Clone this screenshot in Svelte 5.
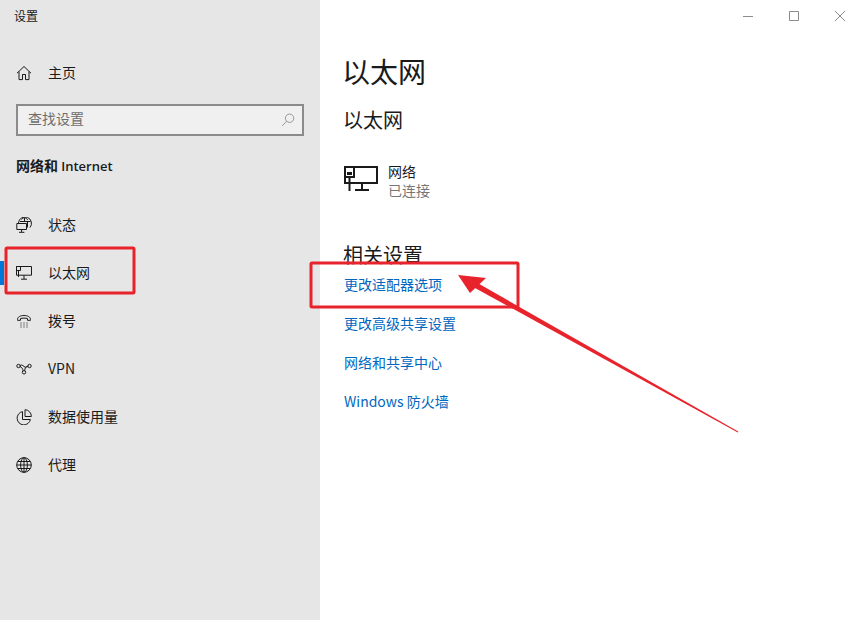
<script>
	const nav = [
		{ id: 'status', label: '状态' },
		{ id: 'ethernet', label: '以太网', active: true },
		{ id: 'dialup', label: '拨号' },
		{ id: 'vpn', label: 'VPN' },
		{ id: 'usage', label: '数据使用量' },
		{ id: 'proxy', label: '代理' }
	];

	const links = ['更改适配器选项', '更改高级共享设置', '网络和共享中心', 'Windows 防火墙'];
</script>

<div class="window">
	<aside class="sidebar">
		<div class="app-title">设置</div>
		<div class="home">
			<svg class="icon" viewBox="0 0 16 16" fill="none" stroke="currentColor">
				<path d="M1 8.200 8 1.500l7 6.700M3 6.600v8h3.500V9.500h3v5.100H13v-8" />
			</svg>
			<span>主页</span>
		</div>
		<div class="search">
			<span>查找设置</span>
			<svg viewBox="0 0 16 16" width="14" height="14" fill="none" stroke="#8a8a8a">
				<circle cx="9.800" cy="6" r="4.800" />
				<path d="M6.400 9.400 1.200 14.800" />
			</svg>
		</div>
		<div class="section">网络和 <span>Internet</span></div>
		<nav>
			{#each nav as item}
				<div class="nav-item">
					{#if item.active}<i class="marker"></i>{/if}
					<svg class="icon" viewBox="0 0 16 16" fill="none" stroke="currentColor">
						{#if item.id === 'status'}
							<path d="M2.500 6A6.500 6.500 0 1 1 14 10.500M5.500 2.500C6.500 1.300 7.500 .7 8.500 .7s2.500 1 3.300 2.300M4 4.500h10.500M8.500 .7v3.800M11.500 4.500v6" />
							<path d="M.8 6.500h9.700v6H.8zM5.600 12.500v2.500M3 15.300h5.400" />
						{:else if item.id === 'ethernet'}
							<path d="M.5 1.500h15v8.700H.5zM.5 1.500h4v4h-4zM2.500 5.500V12M8 10.200v3.800M5 14.200h6" />
						{:else if item.id === 'dialup'}
							<path d="M1.500 6.500C1.500 3.800 4.500 2.500 8 2.500s6.500 1.300 6.500 4v.8h-3V5.500C10 5 6 5 4.500 5.500v1.800h-3z" />
							<path d="M4.500 10h1M7.500 10h1M10.500 10h1M4.500 12h1M7.500 12h1M10.500 12h1M4.500 14h1M7.500 14h1M10.500 14h1" />
						{:else if item.id === 'vpn'}
							<circle cx="2.500" cy="5" r="1.700" />
							<circle cx="13.500" cy="5" r="1.700" />
							<circle cx="8" cy="11.300" r="1.700" />
							<path d="M4 5.500c1.500 .5 3 2.500 3 4.300M12 5.500C10 5 8.500 7.500 8.800 9.800M4 4.700C5 3.500 6.500 4 8 5.500S11 6 12 4.700" />
						{:else if item.id === 'usage'}
							<path d="M6.500 2.600A6.700 6.700 0 1 0 14.400 10.500H6.500zM9 .7a6.500 6.500 0 0 1 6.300 6.800H9z" />
						{:else}
							<circle cx="8" cy="8" r="7.300" />
							<ellipse cx="8" cy="8" rx="3.400" ry="7.300" />
							<path d="M8 .7v14.600M.7 8h14.600M1.700 4.500h12.600M1.700 11.500h12.600" />
						{/if}
					</svg>
					<span>{item.label}</span>
				</div>
			{/each}
		</nav>
	</aside>

	<main class="content">
		<div class="controls">
			<svg viewBox="0 0 10 10" width="10" height="10" stroke="#8c8c8c" fill="none">
				<path d="M0 5.500h10" />
			</svg>
			<svg viewBox="0 0 10 10" width="10" height="10" stroke="#8c8c8c" fill="none">
				<path d="M.5 .5h9v9h-9z" />
			</svg>
			<svg viewBox="0 0 10 10" width="10" height="10" stroke="#8c8c8c" fill="none">
				<path d="M0 0l10 10M10 0 0 10" />
			</svg>
		</div>
		<h1>以太网</h1>
		<h2>以太网</h2>
		<div class="network">
			<svg class="network-icon" viewBox="0 0 34 26" width="34" height="26" fill="none" stroke="#1a1a1a" stroke-width="2">
				<path d="M1 1h32v16H1zM1 1h9v10H1zM5.500 11v14M18 17v7M11 24h14" />
				<path d="M3 6h5v3H3z" fill="#1a1a1a" stroke="none" />
			</svg>
			<div>
				<div>网络</div>
				<div class="muted">已连接</div>
			</div>
		</div>
		<h3>相关设置</h3>
		<ul>
			{#each links as link}
				<li>{link}</li>
			{/each}
		</ul>
	</main>

	<!-- red markup drawn on top of the screenshot -->
	<svg class="markup" viewBox="0 0 863 620" fill="none" stroke="#e8232b">
		<rect x="6" y="248" width="128" height="45" rx="1" stroke-width="3" />
		<rect x="311" y="263" width="207" height="44" rx="1" stroke-width="3" />
		<path d="M468.600 284.400 471.400 279.600 738.200 431.600 737.800 432.400Z" fill="#e8232b" stroke="none" />
		<path d="M458 275 486 278 470 293Z" fill="#e8232b" stroke="none" />
	</svg>
</div>

<style>
	:global(body) {
		margin: 0;
		background: #fff;
	}

	.window {
		position: relative;
		display: flex;
		width: 863px;
		height: 620px;
		overflow: hidden;
		color: #1a1a1a;
		font-family: 'Noto Sans CJK SC', 'Open Sans', sans-serif;
		font-size: 14px;
	}

	.sidebar {
		flex: none;
		width: 320px;
		padding-top: 8px;
		box-sizing: border-box;
		background: #e6e6e6;
	}

	.app-title {
		height: 18px;
		padding-left: 14px;
		font-size: 12px;
		line-height: 16px;
	}

	.icon {
		flex: none;
		width: 16px;
		height: 16px;
	}

	.home,
	.nav-item {
		position: relative;
		display: flex;
		align-items: center;
		gap: 16px;
		height: 48px;
		padding-left: 16px;
	}

	.home span,
	.nav-item span {
		padding-bottom: 2px;
	}

	.home {
		margin-top: 23px;
	}

	.search {
		display: flex;
		align-items: center;
		justify-content: space-between;
		box-sizing: border-box;
		width: 288px;
		height: 32px;
		margin: 7px 0 0 16px;
		padding: 0 7px 0 10px;
		border: 2px solid #8b8b8b;
		background: #f0f0f0;
		color: #6e6e6e;
	}

	.search span {
		padding-bottom: 4px;
	}

	.section {
		margin: 18px 0 0 16px;
		font-size: 14px;
		font-weight: 700;
		line-height: 22px;
	}

	.section span {
		font-family: 'Open Sans', sans-serif;
		font-size: 13px;
		font-weight: 600;
	}

	nav {
		margin-top: 24px;
	}

	.marker {
		position: absolute;
		left: 0;
		top: 12px;
		width: 4px;
		height: 24px;
		background: #0078d7;
	}

	.content {
		flex: 1;
		padding-left: 24px;
		background: #fff;
	}

	.controls {
		display: flex;
		justify-content: flex-end;
		gap: 36px;
		height: 10px;
		padding: 11px 18px 0 0;
	}

	h1,
	h2,
	h3 {
		margin: 0;
		font-weight: 400;
	}

	h1 {
		margin: 29px 0 0 -2px;
		font-size: 28px;
		line-height: 42px;
	}

	h2 {
		margin: 13px 0 0 -1px;
		font-size: 20px;
		line-height: 30px;
	}

	.network {
		display: flex;
		align-items: flex-start;
		gap: 10px;
		margin-top: 27px;
		line-height: 19px;
	}

	.network-icon {
		margin-top: 4px;
	}

	.muted {
		color: #767676;
	}

	h3 {
		margin: 40px 0 0 -1px;
		font-size: 20px;
		line-height: 30px;
	}

	ul {
		margin: -5px 0 0;
		padding: 0;
		list-style: none;
		color: #0067c0;
	}

	li {
		height: 39px;
		line-height: 39px;
	}

	.markup {
		position: absolute;
		inset: 0;
		width: 863px;
		height: 620px;
		pointer-events: none;
	}
</style>
